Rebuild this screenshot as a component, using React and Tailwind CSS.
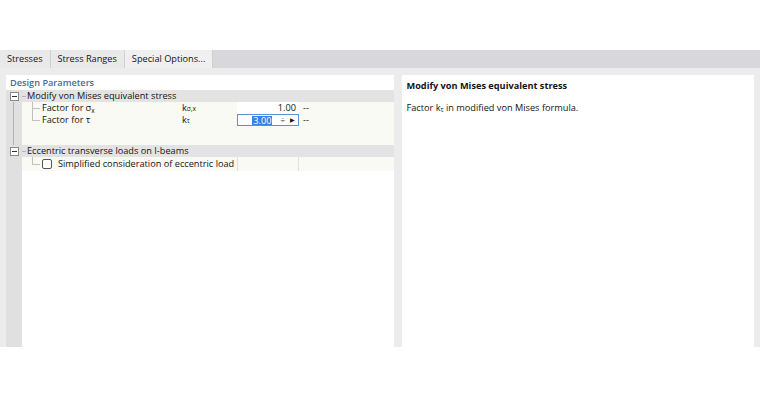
import { useState } from 'react';

const font = "font-['Open_Sans',sans-serif]";

const tabs = ['Stresses', 'Stress Ranges', 'Special Options...'];

const Sub = ({ children }) => <span className="relative top-[1.5px] text-[6.5px] leading-none">{children}</span>;

const MinusBox = () => (
  <div className="relative z-10 flex h-[9px] w-[9px] items-center justify-center border border-[#8a8a8a] bg-white">
    <div className="h-px w-[5px] bg-[#333]" />
  </div>
);

const Gutter = ({ children, line }) => (
  <div className="relative flex w-[16px] shrink-0 items-center justify-center bg-[#e0e0e0]">
    {line && <div className="absolute left-[7px] top-0 h-full w-px bg-[#b4b4b4]" />}
    {children}
  </div>
);

const GroupRow = ({ label }) => (
  <div className="flex h-[12px] bg-[#e3e3e3] leading-none">
    <Gutter>
      <MinusBox />
    </Gutter>
    <div className="flex items-center whitespace-nowrap">
      <div className="h-px w-[4px] bg-[#b4b4b4]" />
      <span className="pl-[1px]">{label}</span>
    </div>
  </div>
);

const Branch = ({ last }) => (
  <div className="relative w-[20px] shrink-0">
    <div className={`absolute left-[10px] top-0 w-px bg-[#c0c0c0] ${last ? 'h-1/2' : 'h-full'}`} />
    <div className="absolute left-[10px] top-1/2 h-px w-[8px] bg-[#c0c0c0]" />
  </div>
);

const ParamRow = ({ label, sub, symbol, symbolSub, value, active, last }) => (
  <div className="flex h-[12px] bg-[#fafaf4] leading-none">
    <Gutter line />
    <Branch last={last} />
    <div className="flex w-[138px] items-center whitespace-nowrap">
      {label}
      {sub && (
        <span className="ml-[2px]">
          {sub[0]}
          <Sub>{sub[1]}</Sub>
        </span>
      )}
    </div>
    <div className="flex w-[57px] items-center whitespace-nowrap pl-[2px]">
      {symbol}
      <Sub>{symbolSub}</Sub>
    </div>
    {active ? (
      <div className="flex w-[62px] items-center justify-end border border-[#5b8fd6] bg-white pr-[3px]">
        <span className="bg-[#3383e6] px-px leading-[9px] text-white">{value}</span>
        <span className="ml-[8px] text-[8px] leading-none">÷</span>
        <span className="ml-[5px] text-[6px] leading-none">▶</span>
      </div>
    ) : (
      <div className="flex w-[62px] items-center justify-end bg-white pr-[3px]">{value}</div>
    )}
    <div className="flex flex-1 items-center pl-[4px]">--</div>
  </div>
);

export default function App() {
  const [tab] = useState(2);

  return (
    <div className={`flex h-[397px] w-[760px] flex-col bg-white text-[9.2px] text-[#141414] ${font}`}>
      <div className="h-[50px]" />

      <div className="flex h-[18px] bg-[#d8d8dc]">
        {tabs.map((name, i) => (
          <div
            key={name}
            className={`flex items-center border-r border-[#d0d0d0] px-[7px] ${
              i === tab ? 'bg-[#f0f0f0]' : 'bg-[#e9e9e9]'
            }`}
          >
            {name}
          </div>
        ))}
      </div>

      <div className="flex h-[279px] gap-[8px] bg-[#ececec] px-[6px] pt-[7px]">
        <div className="flex w-[389px] flex-col bg-white">
          <div className="flex h-[15px] items-center pl-[4px] font-semibold text-[#4a6a9c]">Design Parameters</div>

          <GroupRow label="Modify von Mises equivalent stress" />
          <ParamRow label="Factor for" sub={['σ', 'x']} symbol="k" symbolSub="σ,x" value="1.00" />
          <ParamRow label="Factor for τ" symbol="k" symbolSub="τ" value="3.00" active last />
          <div className="flex h-[19px] bg-[#fafaf4]">
            <Gutter line />
          </div>

          <GroupRow label="Eccentric transverse loads on I-beams" />
          <div className="flex h-[14px] bg-[#fafaf4] leading-none">
            <Gutter />
            <Branch last />
            <div className="flex w-[195px] items-center whitespace-nowrap">
              <div className="mr-[6px] h-[10px] w-[10px] shrink-0 rounded-[2px] border border-[#555] bg-white" />
              Simplified consideration of eccentric load
            </div>
            <div className="w-[62px] border-x border-[#e2e2e2]" />
            <div className="flex-1" />
          </div>

          <div className="flex flex-1">
            <Gutter />
            <div className="flex-1 bg-white" />
          </div>
        </div>

        <div className="flex w-[352px] flex-col bg-white px-[4px] pt-[4px]">
          <div className="font-bold">Modify von Mises equivalent stress</div>
          <div className="mt-[8px]">
            Factor k<Sub>τ</Sub> in modified von Mises formula.
          </div>
        </div>
      </div>

      <div className="h-[50px]" />
    </div>
  );
}
